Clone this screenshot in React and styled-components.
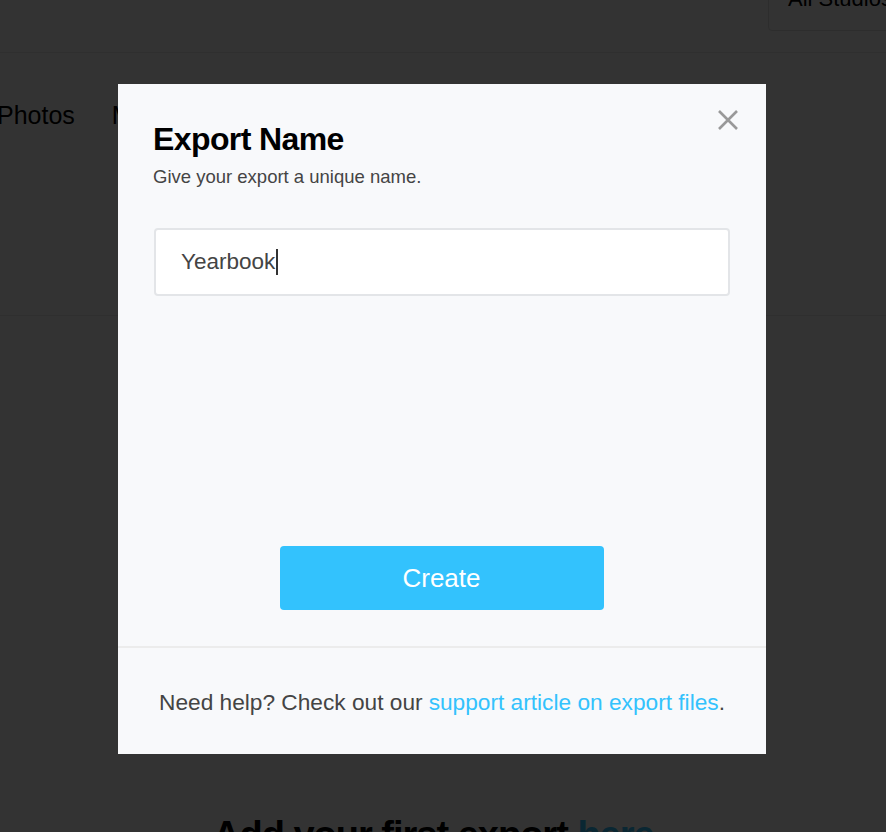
import React from "react";
import styled, { createGlobalStyle } from "styled-components";

const Global = createGlobalStyle`
  html, body { margin: 0; padding: 0; background: #fff; }
  body { font-family: "Liberation Sans", Arial, sans-serif; overflow: hidden; }
  * { box-sizing: border-box; }
`;

const Page = styled.div`
  width: 886px;
  height: 832px;
  background: #fff;
  overflow: hidden;
`;

const Header = styled.header`
  height: 53px;
  border-bottom: 1px solid #e8e8e8;
  display: flex;
  justify-content: flex-end;
  align-items: flex-end;
  padding-bottom: 21px;
`;

const StudioSelect = styled.div`
  width: 150px;
  height: 46px;
  margin-right: -32px;
  border: 1px solid #e0e0e0;
  border-radius: 4px;
  font-size: 22px;
  color: #000;
  padding: 0 19px;
  display: flex;
  align-items: flex-end;
  padding-bottom: 20px;
  line-height: 1;
`;

const Tabs = styled.nav`
  height: 263px;
  border-bottom: 1px solid #e8e8e8;
  display: flex;
  gap: 37px;
  padding: 48px 0 0 0;
  margin-left: -3px;
`;

const Tab = styled.span`
  font-size: 25px;
  color: #000;
  line-height: 28px;
`;

const EmptyHeading = styled.h2`
  margin: 497px 0 0 213px;
  font-size: 38px;
  line-height: 44px;
  font-weight: 700;
  letter-spacing: -1px;
  color: #000;
  white-space: nowrap;
  span { color: #33c2fd; }
`;

const Overlay = styled.div`
  position: fixed;
  inset: 0;
  background: rgba(0, 0, 0, 0.8);
  display: flex;
  justify-content: flex-start;
  align-items: flex-start;
  padding: 84px 0 0 118px;
`;

const Modal = styled.div`
  position: relative;
  width: 648px;
  height: 670px;
  background: #f8f9fb;
  display: flex;
  flex-direction: column;
`;

const Body = styled.div`
  flex: 1;
  display: flex;
  flex-direction: column;
  padding: 36px 36px 36px 35px;
  border-bottom: 2px solid #ececec;
`;

const Title = styled.h1`
  margin: 0;
  font-size: 32px;
  line-height: 38px;
  font-weight: 700;
  letter-spacing: -0.6px;
  color: #000;
`;

const Subtitle = styled.p`
  margin: 8px 0 0;
  font-size: 18.5px;
  line-height: 22px;
  color: #444;
`;

const InputBox = styled.div`
  margin: 40px 0 0 1px;
  height: 68px;
  background: #fff;
  border: 2px solid #e3e5e8;
  border-radius: 4px;
  display: flex;
  align-items: center;
  padding: 0 25px;
  font-size: 22.5px;
  color: #444;
`;

const Caret = styled.span`
  display: inline-block;
  width: 2px;
  height: 26px;
  background: #333;
  margin-left: 1px;
`;

const CreateButton = styled.button`
  margin: auto auto 0;
  width: 324px;
  height: 64px;
  border: 0;
  border-radius: 4px;
  background: #33c2fd;
  color: #fff;
  font-family: "Liberation Sans", Arial, sans-serif;
  font-size: 26px;
  padding: 0;
`;

const Footer = styled.div`
  height: 106px;
  display: flex;
  align-items: center;
  justify-content: center;
  font-size: 22.7px;
  color: #444;
  padding-top: 3px;
  white-space: nowrap;
`;

const Link = styled.a`
  color: #33c2fd;
  text-decoration: none;
  margin-left: 6px;
`;

const Close = styled.button`
  position: absolute;
  top: 24px;
  right: 26px;
  width: 24px;
  height: 24px;
  padding: 0;
  border: 0;
  background: none;
  display: flex;
  align-items: center;
  justify-content: center;
`;

export default function App() {
  return (
    <>
      <Global />
      <Page>
        <Header>
          <StudioSelect>All Studios</StudioSelect>
        </Header>
        <Tabs>
          <Tab>Photos</Tab>
          <Tab>Media</Tab>
        </Tabs>
        <EmptyHeading>
          Add your first export <span>here</span>
        </EmptyHeading>
      </Page>
      <Overlay>
        <Modal>
          <Close aria-label="Close">
            <svg width="22" height="22" viewBox="0 0 22 22">
              <path d="M2 2 L20 20 M20 2 L2 20" stroke="#999" strokeWidth="2.6" />
            </svg>
          </Close>
          <Body>
            <Title>Export Name</Title>
            <Subtitle>Give your export a unique name.</Subtitle>
            <InputBox>
              Yearbook
              <Caret />
            </InputBox>
            <CreateButton>Create</CreateButton>
          </Body>
          <Footer>
            Need help? Check out our
            <Link href="#">support article on export files</Link>.
          </Footer>
        </Modal>
      </Overlay>
    </>
  );
}
